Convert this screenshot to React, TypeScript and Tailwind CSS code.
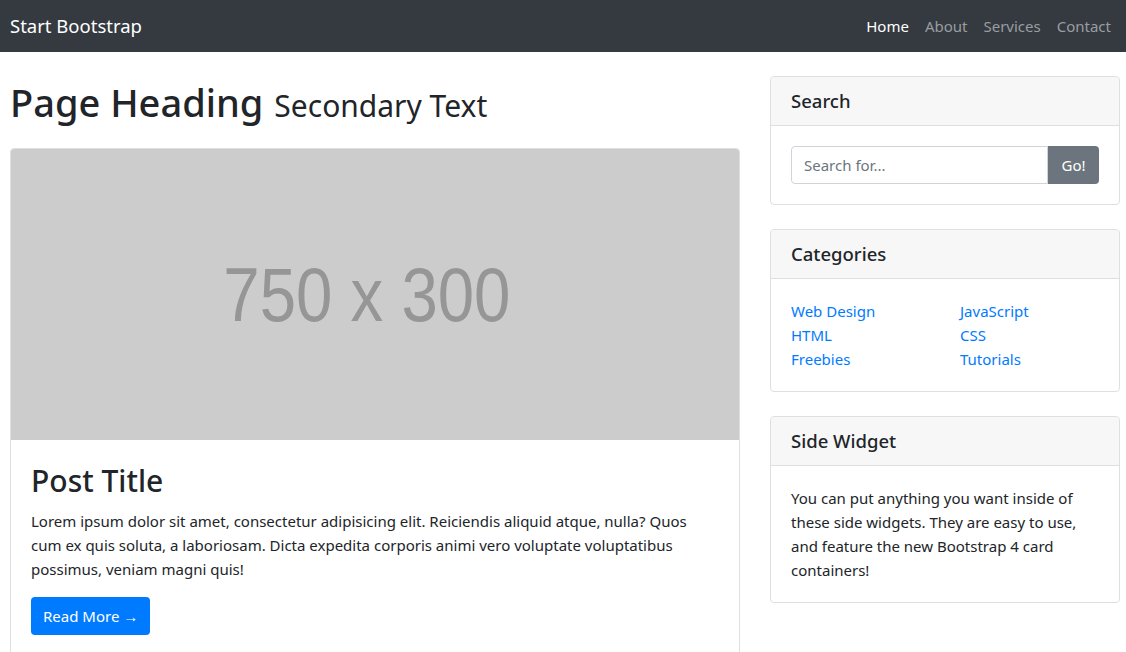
import React from "react";

const font = { fontFamily: '"Noto Sans", "Open Sans", sans-serif' };

function Card({ title, children }: { title: string; children: React.ReactNode }) {
  return (
    <div className="mb-6 rounded border border-[#dfdfdf] bg-white">
      <div className="rounded-t border-b border-[#dfdfdf] bg-[#f7f7f7] px-5 py-3">
        <h5 className="text-[18.5px] font-medium leading-[24px] text-[#212529]">{title}</h5>
      </div>
      <div className="p-5">{children}</div>
    </div>
  );
}

export default function App() {
  return (
    <div className="min-h-[652px] bg-white text-[#212529]" style={font}>
      <nav className="flex h-[52px] items-center justify-between bg-[#343a40] pl-[10px] pr-[7px]">
        <a className="text-[18.5px] leading-[30px] text-white">Start Bootstrap</a>
        <ul className="flex text-[15px] leading-[24px]">
          <li className="px-2 text-white">Home</li>
          <li className="px-2 text-[#9a9da0]">About</li>
          <li className="px-2 text-[#9a9da0]">Services</li>
          <li className="px-2 text-[#9a9da0]">Contact</li>
        </ul>
      </nav>
      <div className="flex gap-[30px] pl-[10px]">
        <div className="w-[730px]">
          <h1 className="my-6 flex h-[48px] items-baseline pt-[2px] text-[38px] font-medium leading-[48px]">
            Page Heading<small className="ml-[11px] text-[30px] font-normal leading-[48px]">Secondary Text</small>
          </h1>
          <div className="overflow-hidden rounded border border-[#dfdfdf]">
            <div className="flex h-[291px] items-center justify-center bg-[#cccccc]">
              <span
                className="mr-[16px] inline-block scale-x-[0.86] text-[76px] leading-none text-[#969696]"
                style={{ fontFamily: '"Liberation Sans", Arial, sans-serif' }}
              >
                750 x 300
              </span>
            </div>
            <div className="px-5 pb-5 pt-[22px]">
              <h2 className="mb-[9px] text-[30px] font-medium leading-[38px]">Post Title</h2>
              <p className="mb-4 text-[15px] leading-[24px]">
                Lorem ipsum dolor sit amet, consectetur adipisicing elit. Reiciendis aliquid atque, nulla? Quos cum ex quis soluta, a laboriosam. Dicta expedita corporis animi vero voluptate voluptatibus possimus, veniam magni quis!
              </p>
              <a className="inline-block rounded bg-[#007bff] px-3 py-[7px] text-[15px] leading-[24px] text-white">
                Read More &rarr;
              </a>
            </div>
          </div>
        </div>
        <div className="mt-6 w-[350px]">
          <Card title="Search">
            <div className="flex">
              <input
                className="h-[38px] w-[257px] rounded-l border border-[#ced4da] px-3 text-[15px] placeholder-[#6c757d] outline-none"
                placeholder="Search for..."
              />
              <button className="h-[38px] w-[51px] rounded-r bg-[#6c757d] text-[15px] text-white">Go!</button>
            </div>
          </Card>
          <Card title="Categories">
            <div className="flex text-[15px] leading-[24px] text-[#007bff]">
              <ul className="w-[169px]">
                <li>Web Design</li>
                <li>HTML</li>
                <li>Freebies</li>
              </ul>
              <ul>
                <li>JavaScript</li>
                <li>CSS</li>
                <li>Tutorials</li>
              </ul>
            </div>
          </Card>
          <Card title="Side Widget">
            <p className="text-[15px] leading-[24px]">
              You can put anything you want inside of these side widgets. They are easy to use, and feature the new Bootstrap 4 card containers!
            </p>
          </Card>
        </div>
      </div>
    </div>
  );
}
